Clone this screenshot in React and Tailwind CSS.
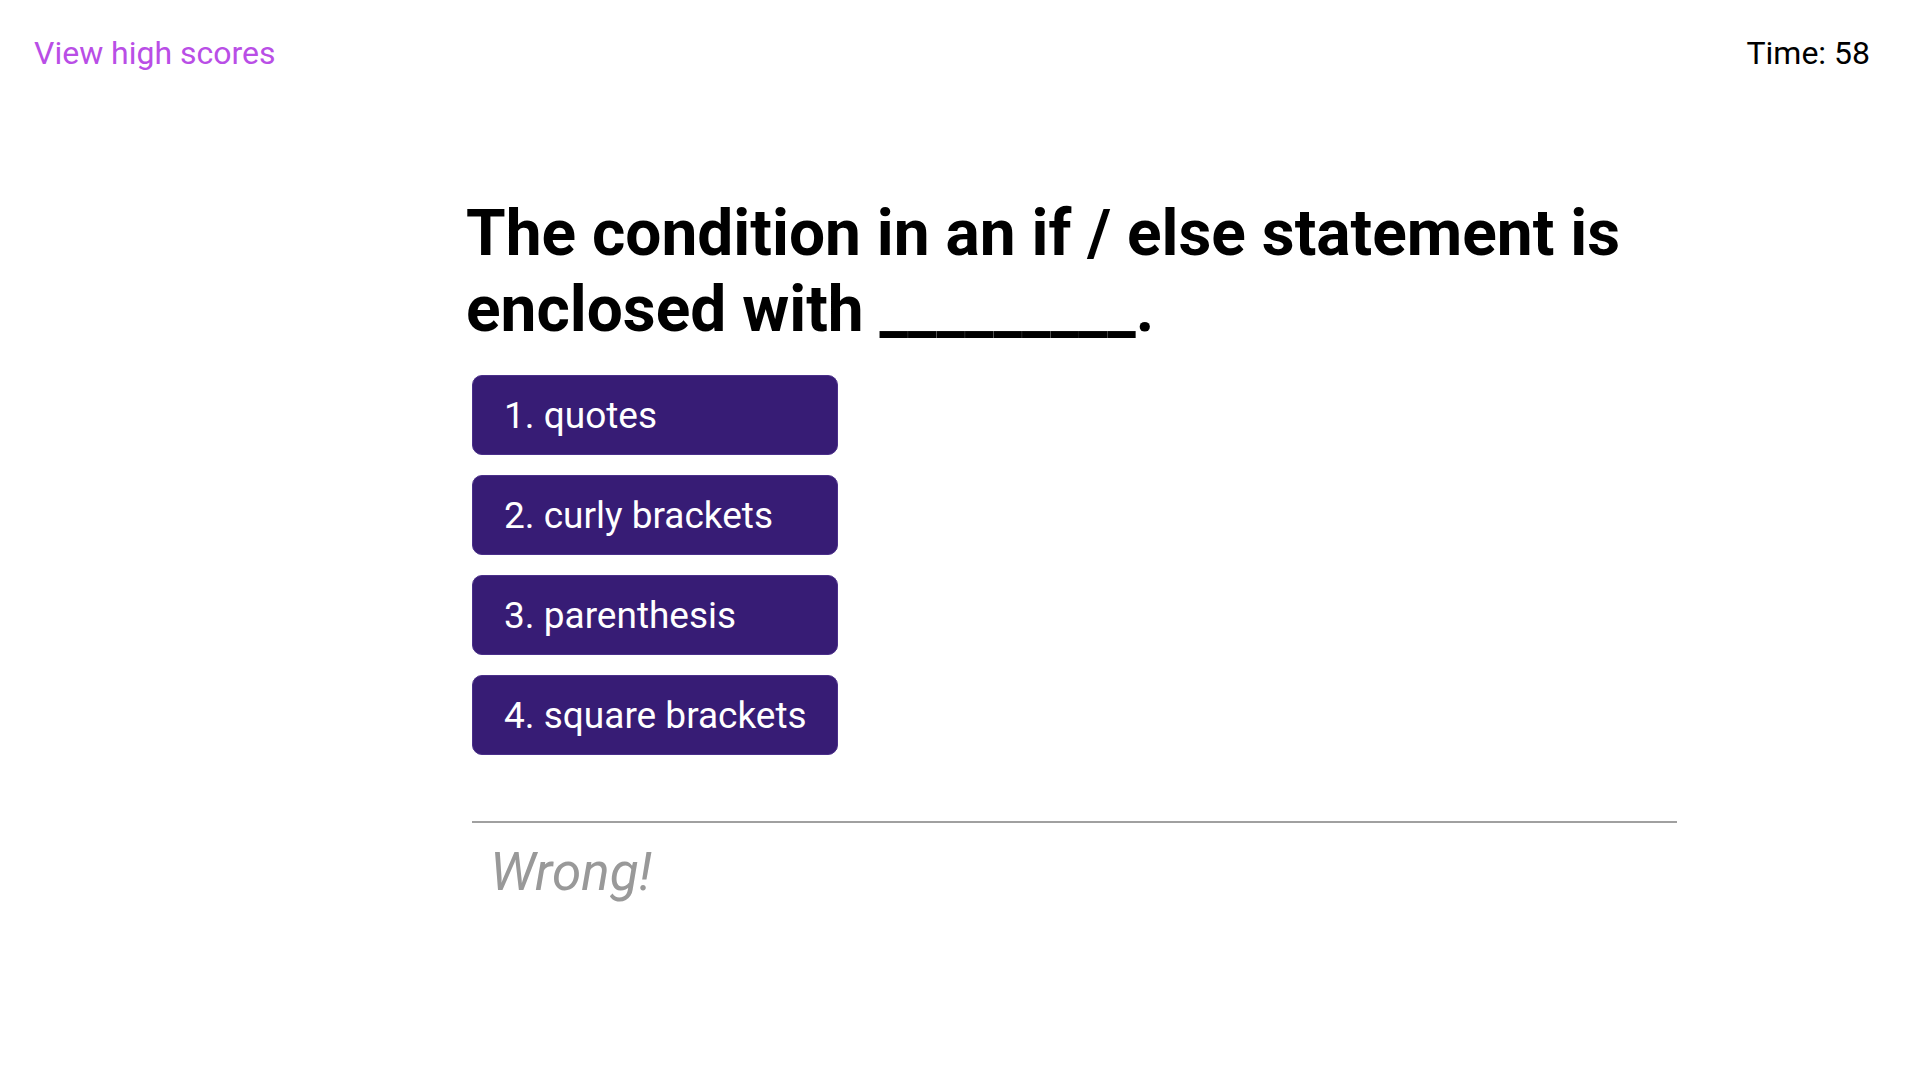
export default function App() {
  const answers = ["1. quotes", "2. curly brackets", "3. parenthesis", "4. square brackets"];
  return (
    <div className="min-h-screen w-full bg-white" style={{ fontFamily: "Roboto, 'Liberation Sans', sans-serif" }}>
      <header className="flex items-start justify-between pl-[34px] pr-[50px] pt-[35px]">
        <a className="text-[32px] leading-[1.172] text-[#b94ee6]">View high scores</a>
        <div className="text-[32px] leading-[1.172] text-black">Time: 58</div>
      </header>
      <main className="ml-[466px] w-[1211px] pt-[123px]">
        <h1 className="text-[64px] font-bold leading-[76px] text-black">
          The condition in an if / else statement is enclosed with _________.
        </h1>
        <div className="mt-[27px] ml-[6px] flex flex-col gap-[20px]">
          {answers.map((a) => (
            <button
              key={a}
              className="flex h-[80px] w-[366px] items-center rounded-[10px] border border-[#4a2f8a] bg-[#371c75] pl-[31px] pt-[2px] text-left text-[37px] text-white"
            >
              {a}
            </button>
          ))}
        </div>
        <div className="ml-[6px] mt-[66px] border-t-2 border-[#a0a0a0]"></div>
        <p className="ml-[24px] mt-[18px] text-[53px] italic leading-[1.172] text-[#999999]">Wrong!</p>
      </main>
    </div>
  );
}
